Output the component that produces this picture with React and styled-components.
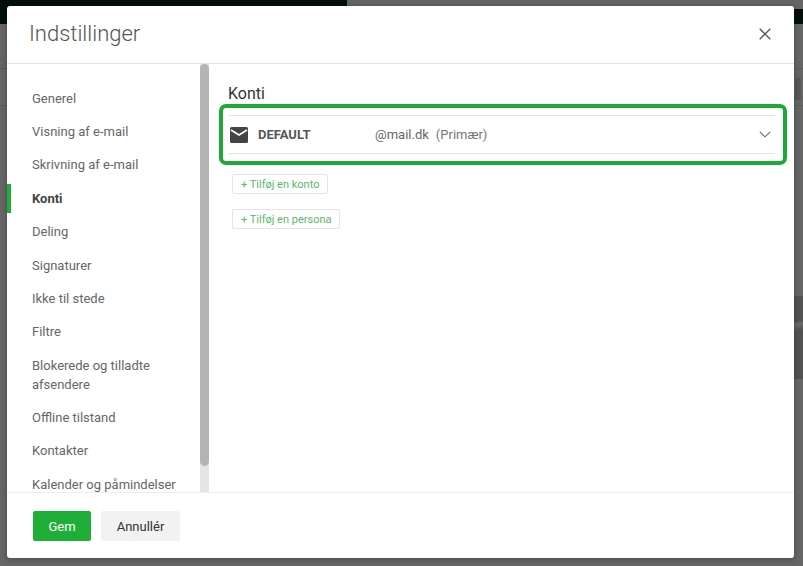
import React from "react";
import styled, { createGlobalStyle } from "styled-components";

const GlobalStyle = createGlobalStyle`
  html, body {
    margin: 0;
    padding: 0;
    height: 100%;
    overflow: hidden;
    font-family: Roboto, "Liberation Sans", sans-serif;
  }
  * {
    box-sizing: border-box;
  }
`;

const menuItems = [
  "Generel",
  "Visning af e-mail",
  "Skrivning af e-mail",
  "Konti",
  "Deling",
  "Signaturer",
  "Ikke til stede",
  "Filtre",
  "Blokerede og tilladte afsendere",
  "Offline tilstand",
  "Kontakter",
  "Kalender og påmindelser",
];

function MailIcon() {
  return (
    <svg width="18" height="16" viewBox="0 0 18 16">
      <path
        fill="#444"
        d="M1.5 0h15A1.5 1.5 0 0 1 18 1.5v13a1.5 1.5 0 0 1-1.5 1.5h-15A1.5 1.5 0 0 1 0 14.5v-13A1.5 1.5 0 0 1 1.5 0z"
      />
      <path fill="none" stroke="#fff" strokeWidth="1.6" d="M1 3l8 5 8-5" />
    </svg>
  );
}

export default function App() {
  return (
    <Page>
      <GlobalStyle />
      <Backdrop>
        <TopBar>
          <BlackSegment />
        </TopBar>
        <PageLine $top={68} />
        <PageLine $top={105} />
        <PageIcon />
        <PageBlock />
      </Backdrop>
      <Dialog>
        <Header>
          <Title>Indstillinger</Title>
          <CloseButton>
            <svg width="12" height="12" viewBox="0 0 12 12">
              <path stroke="#555" strokeWidth="1.3" d="M.7.7l10.6 10.6M11.3.7L.7 11.3" />
            </svg>
          </CloseButton>
        </Header>
        <Body>
          <Sidebar>
            <Menu>
              {menuItems.map((item) => (
                <MenuItem key={item} $active={item === "Konti"}>
                  {item}
                </MenuItem>
              ))}
            </Menu>
          </Sidebar>
          <ScrollTrack>
            <ScrollThumb />
          </ScrollTrack>
          <Content>
            <Heading>Konti</Heading>
            <AccountRow>
              <MailIcon />
              <AccountName>DEFAULT</AccountName>
              <AccountMail>@mail.dk</AccountMail>
              <AccountNote>(Primær)</AccountNote>
              <Chevron width="12" height="7" viewBox="0 0 12 7">
                <path fill="none" stroke="#666" strokeWidth="1.1" d="M.8.8L6 5.8l5.2-5" />
              </Chevron>
            </AccountRow>
            <AddButton>+ Tilføj en konto</AddButton>
            <AddButton>+ Tilføj en persona</AddButton>
            <Highlight />
          </Content>
        </Body>
        <Footer>
          <SaveButton>Gem</SaveButton>
          <CancelButton>Annullér</CancelButton>
        </Footer>
      </Dialog>
    </Page>
  );
}

const Page = styled.div`
  position: relative;
  width: 803px;
  height: 566px;
  overflow: hidden;
`;

const Backdrop = styled.div`
  position: relative;
  height: 100%;
  background: #666;
`;

const TopBar = styled.div`
  height: 24px;
  background: linear-gradient(to right, transparent 794px, #030f0c 794px);
  background-size: 100% 15px;
  background-position: 0 9px;
  background-repeat: no-repeat;
`;

const BlackSegment = styled.div`
  width: 347px;
  height: 100%;
  background: #030f0c;
`;

const PageLine = styled.div`
  position: absolute;
  top: ${(p) => p.$top}px;
  left: 0;
  right: 0;
  height: 1px;
  background: #5c5c5c;
`;

const PageIcon = styled.div`
  position: absolute;
  top: 78px;
  left: 795px;
  width: 6px;
  height: 22px;
  background: #585858;
  border-radius: 1px;
`;

const PageBlock = styled.div`
  position: absolute;
  top: 296px;
  left: 794px;
  right: 0;
  height: 83px;
  background: linear-gradient(170deg, #525252 30%, #6a6a6a 34%, #525252 42%);
`;

const Dialog = styled.div`
  position: absolute;
  top: 6px;
  left: 7px;
  width: 787px;
  height: 552px;
  display: flex;
  flex-direction: column;
  background: #fff;
  border-radius: 3px;
  box-shadow: 0 1px 6px rgba(0, 0, 0, 0.3);
`;

const Header = styled.div`
  height: 58px;
  flex-shrink: 0;
  display: flex;
  align-items: center;
  justify-content: space-between;
  padding: 0 23px 2px 22px;
  border-bottom: 1px solid #e4e4e4;
`;

const Title = styled.div`
  font-size: 22px;
  font-weight: 300;
  color: #555;
`;

const CloseButton = styled.div`
  display: flex;
`;

const Body = styled.div`
  flex: 1;
  min-height: 0;
  display: flex;
`;

const Sidebar = styled.div`
  width: 193px;
  flex-shrink: 0;
  overflow: hidden;
`;

const Menu = styled.div`
  display: flex;
  flex-direction: column;
  padding-top: 17.5px;
`;

const MenuItem = styled.div`
  position: relative;
  padding: 7.2px 0 7.2px 25px;
  font-size: 13px;
  line-height: 19px;
  font-weight: ${(p) => (p.$active ? 700 : 400)};
  color: ${(p) => (p.$active ? "#444" : "#666")};

  ${(p) =>
    p.$active &&
    `&::before {
      content: "";
      position: absolute;
      left: 0;
      top: 2px;
      width: 3.5px;
      height: 29px;
      background: #1fae38;
    }`}
`;

const ScrollTrack = styled.div`
  width: 9px;
  flex-shrink: 0;
  background: #e4e4e4;
`;

const ScrollThumb = styled.div`
  height: 402px;
  background: #b4b4b4;
  border-radius: 5px;
`;

const Content = styled.div`
  position: relative;
  flex: 1;
  display: flex;
  flex-direction: column;
  align-items: flex-start;
  padding: 20px 19px 0 19px;
`;

const Heading = styled.div`
  font-size: 16px;
  line-height: 19px;
  color: #333;
  margin-bottom: 12px;
`;

const AccountRow = styled.div`
  width: 100%;
  height: 39px;
  display: flex;
  align-items: center;
  padding: 0 4px 0 2px;
  border-top: 1px solid #e4e4e4;
  border-bottom: 1px solid #e4e4e4;
  margin-bottom: 20px;
`;

const AccountName = styled.div`
  width: 117px;
  margin-left: 10px;
  font-size: 13px;
  font-weight: 700;
  color: #555;
`;

const AccountMail = styled.div`
  font-size: 13px;
  color: #666;
`;

const AccountNote = styled.div`
  margin-left: 7px;
  font-size: 13px;
  color: #777;
`;

const Chevron = styled.svg`
  margin-left: auto;
`;

const AddButton = styled.div`
  height: 20px;
  display: flex;
  align-items: center;
  margin: 0 0 15px 4px;
  padding: 0 8px;
  border: 1px solid #e4e4e4;
  border-radius: 2px;
  font-size: 11px;
  color: #5cb868;
`;

const Highlight = styled.div`
  position: absolute;
  top: 40px;
  left: 10px;
  width: 567.5px;
  height: 61px;
  border: 4px solid #1fa835;
  border-radius: 7px;
`;

const Footer = styled.div`
  height: 66px;
  flex-shrink: 0;
  display: flex;
  align-items: flex-start;
  gap: 10px;
  padding: 18px 26px 0;
  border-top: 1px solid #eee;
`;

const SaveButton = styled.div`
  width: 58px;
  height: 30px;
  display: flex;
  align-items: center;
  justify-content: center;
  background: #1fae38;
  border-radius: 2px;
  font-size: 13px;
  color: #fff;
`;

const CancelButton = styled.div`
  width: 79px;
  height: 30px;
  display: flex;
  align-items: center;
  justify-content: center;
  background: #f2f2f2;
  border-radius: 2px;
  font-size: 13px;
  color: #333;
`;
